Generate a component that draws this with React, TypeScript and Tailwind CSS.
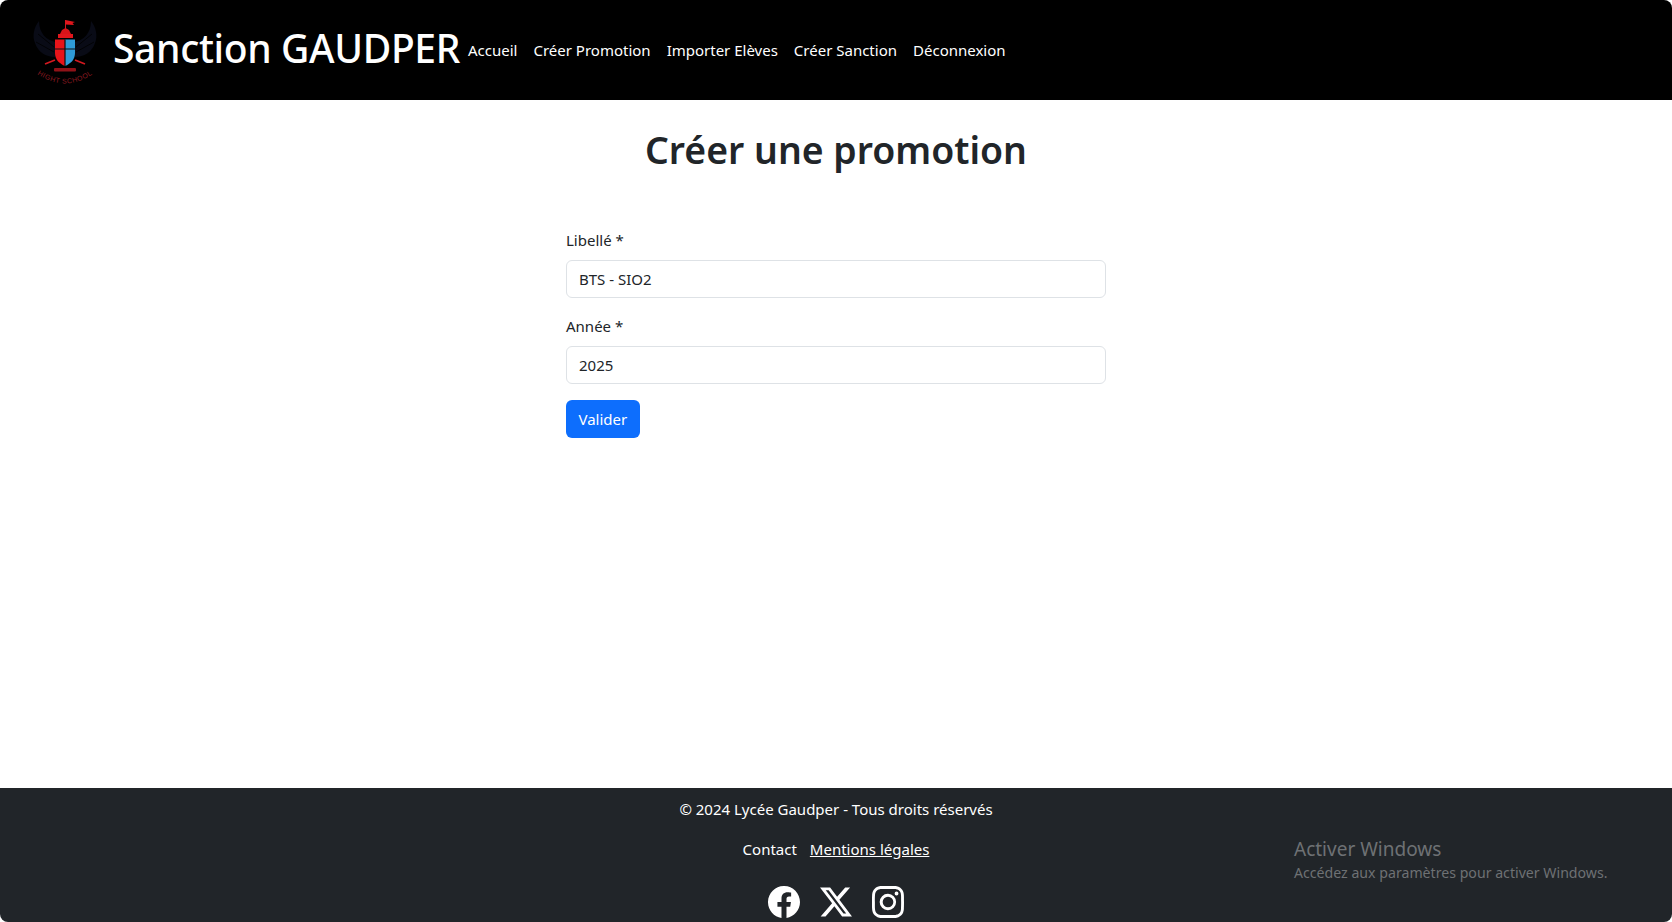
import React from 'react'
import { BsFacebook, BsInstagram, BsTwitterX } from 'react-icons/bs'

const font = "font-['Segoe_UI','Noto_Sans',sans-serif]"

const navLinks = ['Accueil', 'Créer Promotion', 'Importer Elèves', 'Créer Sanction', 'Déconnexion']

const Logo = () => (
  <svg viewBox="28 15 72 74" className="mt-1 h-[74px] w-[72px] shrink-0">
    {/* wings */}
    <path d="M55 42 C47 40 39 34 39 21 C34 27 32 36 35 43 C38 52 46 57 55 57 Z" fill="#090b16" />
    <path d="M75 42 C83 40 91 34 91 21 C96 27 98 36 95 43 C92 52 84 57 75 57 Z" fill="#090b16" />
    <path d="M38 34 L54 47 M36 42 L54 52 M92 34 L76 47 M94 42 L76 52" stroke="#000" strokeWidth="0.800" />
    {/* flag */}
    <path d="M65.500 20 V29" stroke="#d31920" strokeWidth="1" />
    <path d="M65.500 20 L75 22 L72.500 23 L74 25 L65.500 24.500 Z" fill="#e0161c" />
    {/* tower */}
    <path d="M60 34 L62 30 L65.500 28 L69 30 L71 34 Z" fill="#d8141a" />
    <rect x="58" y="34" width="15" height="4" fill="#e0161c" />
    {/* shield */}
    <path d="M55 39.500 H65 V66 C60 64 55 60 55 53 Z" fill="#e8141a" />
    <path d="M65 39.500 H75 V53 C75 60 70 64 65 66 Z" fill="#2f9bd8" />
    <path d="M65 39.500 V66 M55 49 H75" stroke="#101010" strokeWidth="1.200" />
    {/* swords */}
    <path d="M45 64 L55 60 M85 64 L75 60" stroke="#d31920" strokeWidth="1.800" />
    {/* scroll */}
    <rect x="54" y="68" width="22" height="3.500" rx="1" fill="#8f1218" />
    <path id="logo-arc" d="M37 74 Q65 93 93 74" fill="none" />
    <text fontSize="7" fill="#8f1a20" fontFamily="'Liberation Sans', sans-serif" letterSpacing="0.500">
      <textPath href="#logo-arc" startOffset="50%" textAnchor="middle">
        HIGHT SCHOOL
      </textPath>
    </text>
  </svg>
)

export default function App() {
  return (
    <div className={`${font} flex h-screen flex-col overflow-hidden bg-white text-[15px] leading-6 text-[#212529]`}>
      {/* Navbar */}
      <nav className="flex h-[100px] shrink-0 items-center rounded-tl-[8px] rounded-tr-[8px] bg-black pl-[28px] text-white">
        <Logo />
        <span className="mb-1 ml-[13px] text-[39px] leading-[60px] font-medium tracking-[-0.35px] whitespace-nowrap">
          Sanction GAUDPER
        </span>
        <ul className="ml-2 flex items-center gap-4">
          {navLinks.map((link) => (
            <li key={link}>
              <a href="#" className="whitespace-nowrap">
                {link}
              </a>
            </li>
          ))}
        </ul>
      </nav>

      {/* Main */}
      <main className="flex-1">
        <h1 className="mt-[26px] text-center text-[37.4px] leading-[48px] font-semibold">Créer une promotion</h1>
        <form className="mx-auto mt-[54px] w-[540px]">
          <div className="mb-4">
            <label className="mb-2 block">Libellé *</label>
            <input
              readOnly
              value="BTS - SIO2"
              className="block h-[38px] w-full rounded-md border border-[#dee2e6] bg-white px-3 text-[#212529] outline-none"
            />
          </div>
          <div className="mb-4">
            <label className="mb-2 block">Année *</label>
            <input
              readOnly
              value="2025"
              className="block h-[38px] w-full rounded-md border border-[#dee2e6] bg-white px-3 text-[#212529] outline-none"
            />
          </div>
          <button type="button" className="h-[38px] rounded-md bg-[#0d6efd] px-[12.5px] text-white">
            Valider
          </button>
        </form>
      </main>

      {/* Footer */}
      <footer className="relative h-[134px] shrink-0 rounded-br-[8px] rounded-bl-[8px] bg-[#212529] pt-[9px] text-center text-white">
        <p>© 2024 Lycée Gaudper - Tous droits réservés</p>
        <div className="mt-4 flex justify-center gap-[13px]">
          <a href="#">Contact</a>
          <a href="#" className="underline">
            Mentions légales
          </a>
        </div>
        <div className="mt-[25px] flex justify-center gap-[20px]">
          <BsFacebook className="h-8 w-8" />
          <BsTwitterX className="h-8 w-8" />
          <BsInstagram className="h-8 w-8" />
        </div>

        {/* Windows watermark */}
        <div className="absolute top-[48px] left-[1294px] text-left whitespace-nowrap text-[#6e7174]">
          <div className="text-[19px] leading-[27px]">Activer Windows</div>
          <div className="text-[14.15px] leading-[20px]">Accédez aux paramètres pour activer Windows.</div>
        </div>
      </footer>
    </div>
  )
}
